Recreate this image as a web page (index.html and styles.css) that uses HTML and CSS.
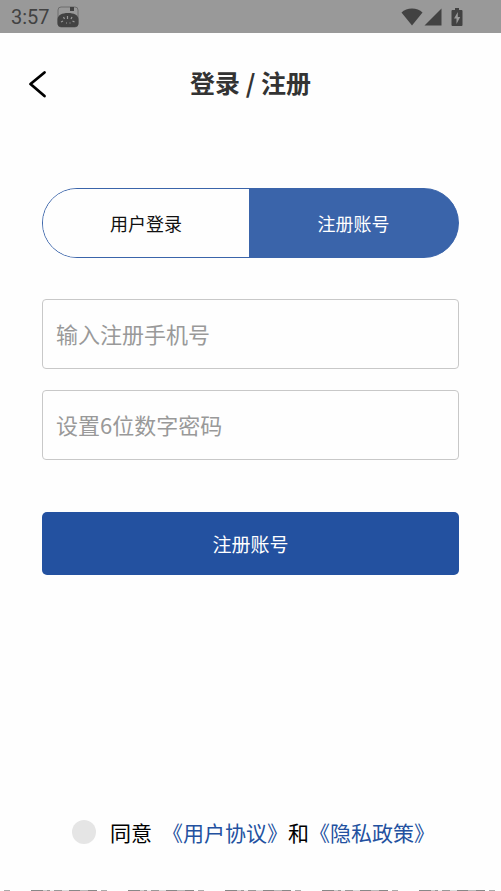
FILE: index.html
```html
<!DOCTYPE html>
<html lang="zh-CN">
<head>
<meta charset="utf-8">
<meta name="viewport" content="width=device-width, initial-scale=1">
<title>登录 / 注册</title>
<link rel="stylesheet" href="styles.css">
</head>
<body>
<div class="status-bar">
  <span class="clock">3:57</span>
  <svg class="app-icon" width="22" height="22" viewBox="0 0 22 22" aria-hidden="true">
    <rect x="1" y="1" width="20" height="20" rx="3" fill="none" stroke="#6c6c6c" stroke-width="1"/>
    <rect x="13" y="1" width="4" height="4" fill="#424242"/>
    <path d="M0.500 13C1 9 5 7 11 7s10 2 10.500 6v4q0 4-4 4h-13q-4 0-4-4z" fill="#424242"/>
    <path d="M10.500 10v3M6.500 11l1 2M15 11l-1 2M4 16l2-1M17.500 16l-2-1M9 17h1M12.500 17h1" stroke="#999" stroke-width="1.200"/>
  </svg>
  <div class="indicators">
    <svg width="22" height="18" viewBox="0 0 22 18" aria-hidden="true"><path d="M11 17.500L.5 4.500C3 2 7 .5 11 .5s8 1.500 10.500 4z" fill="#424242"/></svg>
    <svg width="18" height="18" viewBox="0 0 18 18" aria-hidden="true"><path d="M17.500 .5v17H.5z" fill="#424242"/></svg>
    <svg class="battery" width="12" height="18" viewBox="0 0 12 18" aria-hidden="true"><path d="M4 0h4v2h2.500q1 0 1 1v14q0 1-1 1h-9q-1 0-1-1V3q0-1 1-1H4z" fill="#424242"/><path d="M6.800 4L3 10.500h2.500V16L9.200 9H6.800z" fill="#999"/></svg>
  </div>
</div>
<header class="header">
  <button class="back" type="button" aria-label="返回">
    <svg width="20" height="30" viewBox="0 0 20 30" aria-hidden="true"><path d="M16.500 3.500L2.500 15l14 12" fill="none" stroke="#000" stroke-width="2.800" stroke-linecap="round" stroke-linejoin="round"/></svg>
  </button>
  <h1 class="title">登录 / 注册</h1>
</header>
<main class="content">
  <div class="tabs">
    <button class="tab" type="button">用户登录</button>
    <button class="tab tab-active" type="button">注册账号</button>
  </div>
  <form class="form">
    <input class="field" type="tel" aria-label="手机号" placeholder="输入注册手机号">
    <input class="field" type="password" aria-label="密码" placeholder="设置6位数字密码">
    <button class="submit" type="button">注册账号</button>
  </form>
</main>
<footer class="agreement">
  <input class="agree-box" id="agree" type="checkbox">
  <label class="agree-label" for="agree">同意</label>
  <a class="link" href="#terms">《用户协议》</a><span>和</span><a class="link" href="#privacy">《隐私政策》</a>
</footer>
<div class="edge"></div>
</body>
</html>
```
FILE: styles.css
```css
* {
  box-sizing: border-box;
}

body {
  display: flex;
  flex-direction: column;
  min-height: 100vh;
  margin: 0;
  background: #fefefe;
  color: #111;
  font-family: "Noto Sans CJK SC", sans-serif;
}

button,
input {
  margin: 0;
  font-family: inherit;
}

svg {
  display: block;
}

.status-bar {
  display: flex;
  align-items: center;
  height: 33px;
  padding: 0 38px 0 11px;
  background: #999;
}

.clock {
  color: #424242;
  font-family: Roboto, sans-serif;
  font-size: 20px;
  line-height: 32px;
}

.app-icon {
  margin-left: 7px;
}

.indicators {
  display: flex;
  gap: 1px;
  margin-left: auto;
}

.battery {
  margin-left: 8px;
}

.header {
  display: grid;
  grid-template-columns: 48px 1fr 48px;
  align-items: center;
  height: 101px;
}

.back {
  justify-self: end;
  padding: 0;
  border: 0;
  background: none;
}

.title {
  margin: 0;
  padding-bottom: 4px;
  color: #333;
  font-size: 25px;
  font-weight: 700;
  line-height: 36px;
  text-align: center;
}

.content {
  padding: 54px 42px 0;
}

.tabs {
  display: grid;
  grid-template-columns: 206fr 209fr;
  height: 70px;
  overflow: hidden;
  border: 1px solid #3a64aa;
  border-radius: 35px;
  background: linear-gradient(90deg, #fefefe 50%, #3a64aa 50%);
}

.tab {
  padding: 0;
  border: 0;
  background: #fefefe;
  color: #111;
  font-size: 18px;
}

.tab-active {
  background: #3a64aa;
  color: #fff;
}

.form {
  display: flex;
  flex-direction: column;
  gap: 21px;
  margin-top: 41px;
}

.field {
  width: 100%;
  height: 70px;
  padding: 0 13px 2px;
  border: 1px solid #c8c8c8;
  border-radius: 4px;
  background: #fefefe;
  color: #111;
  font-size: 22px;
}

.field::placeholder {
  color: #999;
}

.submit {
  height: 63px;
  margin-top: 31px;
  border: 0;
  border-radius: 5px;
  background: #2351a0;
  color: #fff;
  font-size: 19px;
}

.agreement {
  display: flex;
  align-items: center;
  margin-top: auto;
  padding: 0 48px 43px 72px;
  color: #000;
  font-size: 21px;
  line-height: 30px;
  white-space: nowrap;
}

.agree-box {
  width: 24px;
  height: 24px;
  border-radius: 50%;
  background: #e5e5e5;
  appearance: none;
}

.agree-box:checked {
  background: #2351a0;
}

.agree-label {
  margin: 0 10px 0 14px;
}

.link {
  color: #2351a0;
  text-decoration: none;
}

.edge {
  height: 1px;
  background: repeating-linear-gradient(90deg, #fefefe 0 4px, #aaa 4px 10px, #fefefe 10px 31px, #888 31px 43px, #ccc 43px 47px, #999 47px 50px, #eee 50px 54px, #999 54px 62px, #ddd 62px 69px, #888 69px 80px, #bbb 80px 88px, #888 88px 97px);
}
```
